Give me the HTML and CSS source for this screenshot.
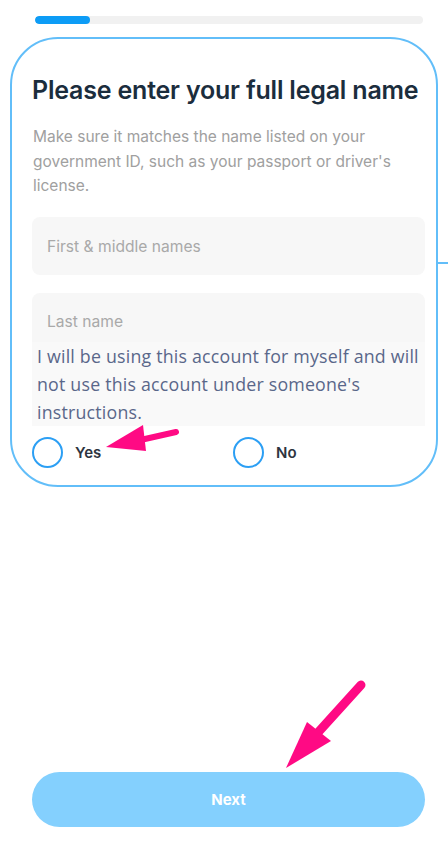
FILE: index.html
```html
<!DOCTYPE html>
<html lang="en">
<head>
<meta charset="utf-8">
<title>Legal name</title>
<link rel="stylesheet" href="styles.css">
</head>
<body>
<div class="screen">
  <div class="progress"><div class="progress-fill"></div></div>
  <div class="card">
    <h1 class="title">Please enter your full legal name</h1>
    <p class="subtitle">Make sure it matches the name listed on your government ID, such as your passport or driver's license.</p>
    <div class="field"><span class="placeholder">First &amp; middle names</span></div>
    <div class="field field-last">
      <span class="placeholder">Last name</span>
      <p class="notice">I will be using this account for myself and will not use this account under someone's instructions.</p>
    </div>
    <div class="choices">
      <label class="choice"><span class="radio"></span><span class="choice-label">Yes</span></label>
      <label class="choice"><span class="radio"></span><span class="choice-label">No</span></label>
    </div>
    <span class="edge-line"></span>
  </div>
  <div class="spacer"></div>
  <button class="next">Next</button>
</div>
<svg class="annot" width="448" height="863" viewBox="0 0 448 863">
  <line x1="176" y1="432" x2="136" y2="441" stroke="#ff0a84" stroke-width="6" stroke-linecap="round"/>
  <polygon points="106,447 143,425 146,451" fill="#ff0a84"/>
  <line x1="361" y1="685" x2="313" y2="738" stroke="#ff0a84" stroke-width="9" stroke-linecap="round"/>
  <polygon points="286,768 307,722 331,741" fill="#ff0a84"/>
</svg>
</body>
</html>
```
FILE: styles.css
```css
html, body {
  margin: 0;
  padding: 0;
  background: #ffffff;
}
body {
  font-family: Inter, "Noto Sans", sans-serif;
  position: relative;
  width: 448px;
  height: 863px;
  overflow: hidden;
}
.screen {
  display: flex;
  flex-direction: column;
  height: 863px;
}
.progress {
  margin: 16px 25px 0 35px;
  height: 8px;
  border-radius: 4px;
  background: #f1f1f1;
  overflow: hidden;
}
.progress-fill {
  width: 55px;
  height: 100%;
  background: #0d9cf6;
  border-radius: 4px;
}
.card {
  position: relative;
  margin: 13px 10px 0 10px;
  height: 450px;
  box-sizing: border-box;
  border: 2px solid #62bef9;
  border-radius: 48px;
  padding: 36px 11px 0 20px;
}
.title {
  margin: 0;
  font-size: 25px;
  font-weight: 600;
  color: #1b2d3d;
  line-height: 30px;
  letter-spacing: -0.2px;
  white-space: nowrap;
}
.subtitle {
  margin: 20px 0 0 1px;
  font-size: 15.5px;
  line-height: 24.5px;
  color: #a0a0a0;
}
.field {
  margin-top: 18.5px;
  height: 58px;
  background: #f7f7f7;
  border-radius: 8px;
  display: flex;
  align-items: center;
  padding-left: 15px;
  box-sizing: border-box;
}
.placeholder {
  font-size: 15.6px;
  color: #a9a9a9;
}
.field-last {
  position: relative;
  margin-top: 18px;
  height: auto;
  display: block;
  padding: 19px 0 0 0;
}
.field-last .placeholder {
  display: block;
  padding-left: 15px;
  line-height: 20px;
}
.notice {
  margin: 10px 0 0 0;
  padding: 0 4px 0 5px;
  background: #f9f9f9;
  font-family: "Open Sans", "Noto Sans", sans-serif;
  font-size: 17.8px;
  line-height: 28px;
  letter-spacing: 0.2px;
  color: #59678a;
}
.choices {
  display: flex;
  margin-top: 11px;
}
.choice {
  display: flex;
  align-items: center;
  width: 201px;
  flex: none;
}
.radio {
  width: 27px;
  height: 27px;
  border: 2.5px solid #2c9ff4;
  border-radius: 50%;
  flex: none;
}
.choice-label {
  margin-left: 12px;
  font-size: 15px;
  font-weight: 600;
  color: #2d3440;
}
.edge-line {
  position: absolute;
  right: -12px;
  top: 223px;
  width: 10px;
  height: 2px;
  background: #62bef9;
}
.spacer {
  flex: 1;
}
.next {
  margin: 0 23px 36px 32px;
  height: 55px;
  border: none;
  border-radius: 28px;
  background: #84d0fe;
  color: #ffffff;
  font-family: Inter, "Noto Sans", sans-serif;
  font-size: 15px;
  font-weight: 700;
}
.annot {
  position: absolute;
  left: 0;
  top: 0;
  pointer-events: none;
}
```
